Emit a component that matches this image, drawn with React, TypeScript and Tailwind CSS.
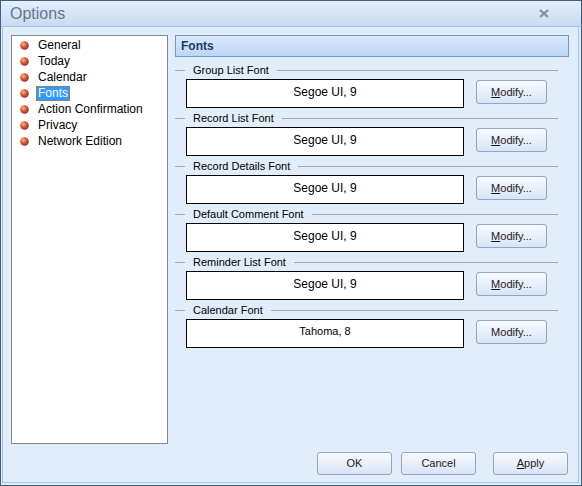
import type { ReactNode } from 'react';

const pages = ['General', 'Today', 'Calendar', 'Fonts', 'Action Confirmation', 'Privacy', 'Network Edition'];

const fonts = [
  { label: 'Group List Font', value: 'Segoe UI, 9', key: true },
  { label: 'Record List Font', value: 'Segoe UI, 9', key: true },
  { label: 'Record Details Font', value: 'Segoe UI, 9', key: true },
  { label: 'Default Comment Font', value: 'Segoe UI, 9', key: true },
  { label: 'Reminder List Font', value: 'Segoe UI, 9', key: true },
  { label: 'Calendar Font', value: 'Tahoma, 8', key: false },
];

const Bullet = () => (
  <svg width="9" height="9" viewBox="0 0 9 9" className="shrink-0">
    <defs>
      <radialGradient id="ball" cx="0.38" cy="0.35" r="0.65">
        <stop offset="0" stopColor="#fbc4ae" />
        <stop offset="0.45" stopColor="#e0603c" />
        <stop offset="1" stopColor="#9a2f14" />
      </radialGradient>
    </defs>
    <circle cx="4.5" cy="4.5" r="4.3" fill="url(#ball)" />
  </svg>
);

const WinButton = ({ children, className = '' }: { children: ReactNode; className?: string }) => (
  <div
    className={`flex items-center justify-center rounded-[3px] border border-[#8da5c6] bg-gradient-to-b from-[#f7faff] to-[#d9e5f5] text-[11px] text-[#1b1b1b] ${className}`}
  >
    {children}
  </div>
);

const FontGroup = ({ label, value, hasKey }: { label: string; value: string; hasKey: boolean }) => (
  <div className="flex flex-col pb-[3px]">
    <div className="mr-[11px] flex h-[14px] items-center">
      <div className="h-px w-[10px] bg-[#a7a7a7]" />
      <span className="px-[8px] text-[11px] leading-[14px] text-black">{label}</span>
      <div className="h-px flex-1 bg-[#a7a7a7]" />
    </div>
    <div className="mt-[2px] flex items-start">
      <div
        className={`ml-[11px] flex h-[29px] w-[278px] justify-center border border-black bg-white pt-[3px] text-black ${
          hasKey ? 'text-[12px]' : 'text-[11px]'
        }`}
      >
        {value}
      </div>
      <WinButton className="ml-[12px] mt-px h-[24px] w-[71px]">
        {hasKey ? (
          <span>
            <span className="underline">M</span>odify...
          </span>
        ) : (
          <span>Modify...</span>
        )}
      </WinButton>
    </div>
  </div>
);

const App = () => {
  return (
    <div
      className="flex h-[486px] w-[582px] flex-col border border-[#3e5e88] bg-[#e2edfb]"
      style={{ fontFamily: '"Liberation Sans", Arial, sans-serif' }}
    >
      <div className="flex h-[26px] shrink-0 items-center justify-between border-b border-[#a6c5ec] bg-gradient-to-b from-[#e5eefb] to-[#c8daf2] pl-[9px] pr-[32px]">
        <span className="text-[16px] leading-none text-[#63778f]">Options</span>
        <svg width="10" height="9" viewBox="0 0 10 9">
          <path d="M1 1 L9 8 M9 1 L1 8" stroke="#7b8fa9" strokeWidth="2.2" />
        </svg>
      </div>

      <div className="mb-[2px] ml-px mr-[2px] flex flex-1 flex-col border-x border-b border-[#a3c2ea]">
        <div className="flex gap-[7px] pl-[8px] pr-[9px] pt-[8px]">
          <div className="flex h-[409px] w-[157px] shrink-0 flex-col border border-[#828790] bg-white pt-px">
            {pages.map((p) => (
              <div key={p} className="flex h-[16px] items-center">
                <div className="ml-[8px] mr-[8px] flex w-[9px] justify-center">
                  <Bullet />
                </div>
                {p === 'Fonts' ? (
                  <span className="-ml-px border border-dotted border-[#c4701a] bg-[#3399ff] px-px text-[12px] leading-[13px] text-white">
                    {p}
                  </span>
                ) : (
                  <span className="ml-px text-[12px] leading-[14px] text-black">{p}</span>
                )}
              </div>
            ))}
          </div>

          <div className="flex flex-1 flex-col">
            <div className="flex h-[22px] items-center border border-[#6e98cf] bg-gradient-to-b from-[#dce9fb] to-[#bdd5f3] pl-[5px]">
              <span className="text-[12px] font-bold text-[#1a3c6e]">Fonts</span>
            </div>
            <div className="mt-[6px] flex flex-col">
              {fonts.map((f) => (
                <FontGroup key={f.label} label={f.label} value={f.value} hasKey={f.key} />
              ))}
            </div>
          </div>
        </div>

        <div className="mt-[8px] flex justify-end pr-[10px]">
          <WinButton className="h-[23px] w-[75px]">OK</WinButton>
          <WinButton className="ml-[9px] h-[23px] w-[75px]">Cancel</WinButton>
          <WinButton className="ml-[17px] h-[23px] w-[75px]">
            <span>
              <span className="underline">A</span>pply
            </span>
          </WinButton>
        </div>
      </div>
    </div>
  );
};

export default App;
